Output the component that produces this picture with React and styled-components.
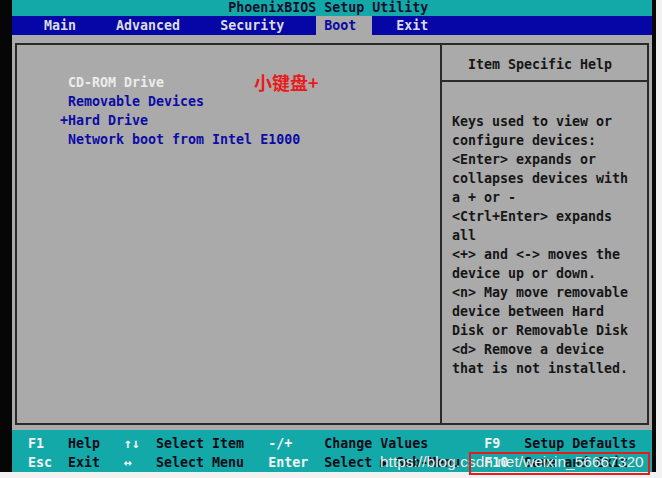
import styled, { createGlobalStyle } from "styled-components";

const GlobalStyle = createGlobalStyle`
  html, body {
    margin: 0;
    padding: 0;
    background: #f2f2f2;
  }
  body {
    width: 662px;
    height: 478px;
    overflow: hidden;
  }
`;

const Page = styled.div`
  position: relative;
  width: 662px;
  height: 478px;
  background: #f2f2f2;
`;

const Monitor = styled.div`
  width: 656px;
  height: 472px;
  box-sizing: border-box;
  padding-left: 12px;
  background: #060606;
`;

const Screen = styled.div`
  width: 640px;
  height: 472px;
  display: flex;
  flex-direction: column;
  font-family: "DejaVu Sans Mono", "Liberation Mono", monospace;
  font-size: 13.3px;
  font-weight: bold;
  line-height: 19px;
  white-space: pre;
`;

const TitleBar = styled.div`
  height: 16px;
  line-height: 15px;
  padding-left: 27ch;
  background: #14a9a9;
  color: #10102c;
`;

const MenuBar = styled.div`
  height: 19px;
  display: flex;
  gap: 3ch;
  padding-left: 3ch;
  background: #0606a6;
`;

const Tab = styled.div`
  padding: 0 ${(p) => (p.$active ? "2ch" : "1ch")} 0 1ch;
  margin-right: ${(p) => (p.$active ? "-1ch" : "0")};
  background: ${(p) => (p.$active ? "#aaaaaa" : "transparent")};
  color: ${(p) => (p.$active ? "#0a0aa0" : "#dcdce4")};
`;

const Body = styled.div`
  flex: 1;
  box-sizing: border-box;
  padding: 8px 3px 5px 3px;
  background: #aaaaaa;
`;

const Box = styled.div`
  height: 100%;
  box-sizing: border-box;
  border: 2px solid #2a2a2a;
  display: grid;
  grid-template-columns: 423px 1fr;
`;

const LeftPanel = styled.div`
  position: relative;
  padding: 28px 0 0 43px;
`;

const Item = styled.div`
  display: flex;
  color: ${(p) => (p.$selected ? "#ececec" : "#0c0ca4")};
`;

const Marker = styled.span`
  width: 1ch;
`;

const Note = styled.div`
  position: absolute;
  left: 237px;
  top: 25px;
  font-family: "Noto Sans CJK SC", sans-serif;
  font-size: 18px;
  font-weight: bold;
  line-height: 24px;
  color: #ea1a1a;
`;

const RightPanel = styled.div`
  border-left: 2px solid #2a2a2a;
  display: flex;
  flex-direction: column;
  color: #161616;
`;

const HelpHeader = styled.div`
  height: 37px;
  box-sizing: border-box;
  padding: 10px 0 0 26px;
  border-bottom: 2px solid #2a2a2a;
`;

const HelpBody = styled.div`
  padding: 30px 0 0 10px;
`;

const Footer = styled.div`
  height: 42px;
  box-sizing: border-box;
  padding-top: 4px;
  background: #14a9a9;
`;

const FooterRow = styled.div`
  display: grid;
  grid-template-columns: 5ch 7ch 4ch 14ch 7ch 20ch 5ch 1fr;
  padding-left: 2ch;
`;

const Key = styled.span`
  color: #f4f4f4;
`;

const Desc = styled.span`
  color: #0c0c18;
`;

const Watermark = styled.div`
  position: absolute;
  left: 380px;
  top: 452px;
  font-family: "Liberation Sans", Arial, sans-serif;
  font-size: 15.5px;
  line-height: 20px;
  color: rgba(255, 255, 255, 0.92);
  text-shadow: 0 0 1px rgba(90, 90, 90, 0.6);
`;

const Highlight = styled.div`
  position: absolute;
  left: 469px;
  top: 452px;
  width: 181px;
  height: 23px;
  box-sizing: border-box;
  border: 2px solid #e61c1c;
`;

const tabs = ["Main", "Advanced", "Security", "Boot", "Exit"];

const devices = [
  { label: "CD-ROM Drive", selected: true },
  { label: "Removable Devices" },
  { label: "Hard Drive", marker: "+" },
  { label: "Network boot from Intel E1000" },
];

const helpLines = [
  "Keys used to view or",
  "configure devices:",
  "<Enter> expands or",
  "collapses devices with",
  "a + or -",
  "<Ctrl+Enter> expands",
  "all",
  "<+> and <-> moves the",
  "device up or down.",
  "<n> May move removable",
  "device between Hard",
  "Disk or Removable Disk",
  "<d> Remove a device",
  "that is not installed.",
];

const footerRows = [
  ["F1", "Help", "↑↓", "Select Item", "-/+", "Change Values", "F9", "Setup Defaults"],
  ["Esc", "Exit", "↔", "Select Menu", "Enter", "Select ▶ Sub-Menu", "F10", "Save and Exit"],
];

export default function App() {
  return (
    <Page>
      <GlobalStyle />
      <Monitor>
        <Screen>
          <TitleBar>PhoenixBIOS Setup Utility</TitleBar>
          <MenuBar>
            {tabs.map((t) => (
              <Tab key={t} $active={t === "Boot"}>{t}</Tab>
            ))}
          </MenuBar>
          <Body>
            <Box>
              <LeftPanel>
                {devices.map((d) => (
                  <Item key={d.label} $selected={d.selected}>
                    <Marker>{d.marker || " "}</Marker>
                    <span>{d.label}</span>
                  </Item>
                ))}
                <Note>小键盘+</Note>
              </LeftPanel>
              <RightPanel>
                <HelpHeader>Item Specific Help</HelpHeader>
                <HelpBody>
                  {helpLines.map((l, i) => (
                    <div key={i}>{l}</div>
                  ))}
                </HelpBody>
              </RightPanel>
            </Box>
          </Body>
          <Footer>
            {footerRows.map((row, i) => (
              <FooterRow key={i}>
                {row.map((cell, j) =>
                  j % 2 === 0 ? <Key key={j}>{cell}</Key> : <Desc key={j}>{cell}</Desc>
                )}
              </FooterRow>
            ))}
          </Footer>
        </Screen>
      </Monitor>
      <Watermark>https://blog.csdn.net/weixin_56667320</Watermark>
      <Highlight />
    </Page>
  );
}
